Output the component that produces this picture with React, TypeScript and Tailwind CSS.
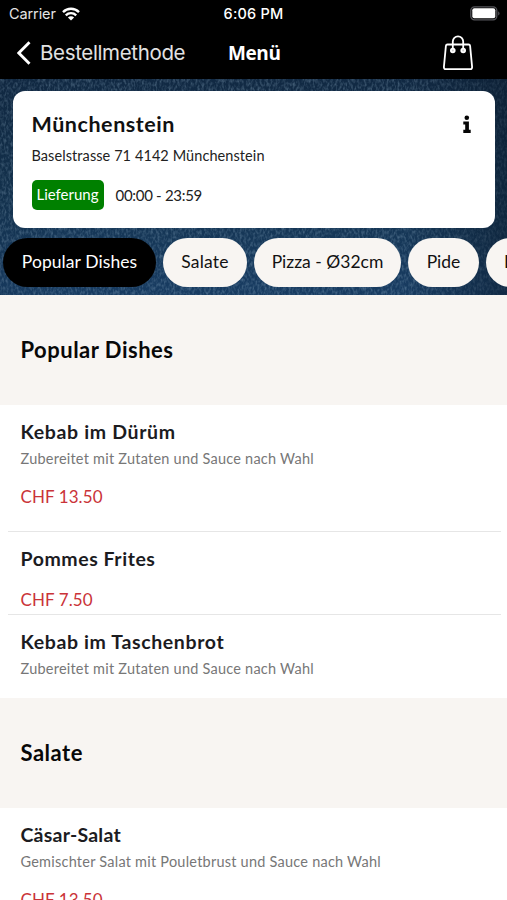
import React from "react";

type Dish = {
  name: string;
  nameClass: string;
  description?: string;
  price?: string;
  rowClass: string;
};

function Denim() {
  return (
    <svg className="absolute inset-0 h-full w-full" viewBox="0 0 507 216" preserveAspectRatio="none" aria-hidden="true">
      <defs>
        <linearGradient id="dye" x1="0" y1="0" x2="0" y2="1">
          <stop offset="0" stopColor="#112943" />
          <stop offset="0.5" stopColor="#14334f" />
          <stop offset="1" stopColor="#183c62" />
        </linearGradient>
        <linearGradient id="edge" x1="0" y1="0" x2="1" y2="0">
          <stop offset="0" stopColor="#0a1a2c" stopOpacity="0.1" />
          <stop offset="0.12" stopColor="#0a1a2c" stopOpacity="0" />
          <stop offset="0.8" stopColor="#0a1a2c" stopOpacity="0" />
          <stop offset="1" stopColor="#0a1a2c" stopOpacity="0.55" />
        </linearGradient>
        <filter id="weave" x="0" y="0" width="100%" height="100%">
          <feTurbulence type="fractalNoise" baseFrequency="0.45 0.25" numOctaves="2" seed="8" />
          <feColorMatrix values="0 0 0 0 0.34  0 0 0 0 0.5  0 0 0 0 0.64  0.7 0 0 0 -0.28" />
        </filter>
      </defs>
      <rect width="507" height="216" fill="url(#dye)" />
      <rect width="507" height="216" filter="url(#weave)" />
      <rect width="507" height="216" fill="url(#edge)" />
    </svg>
  );
}

function StatusBar() {
  return (
    <div className="flex h-[27px] items-center justify-between pr-[7px] pl-[9px] font-['Inter',sans-serif] text-white">
      <div className="flex w-[179px] items-center gap-[6px]">
        <span className="text-[14.5px] tracking-[-0.1px] text-[#e4e4e4]">Carrier</span>
        <svg width="18" height="14" viewBox="0 0 18 14" fill="none" stroke="#fff" strokeWidth="2.4">
          <path d="M1 5.1a11.4 11.4 0 0 1 16 0" />
          <path d="M3.8 8.3a7.4 7.4 0 0 1 10.4 0" />
          <path d="M9 13.6 5.9 10.5a4.4 4.4 0 0 1 6.2 0z" fill="#fff" stroke="none" />
        </svg>
      </div>
      <span className="text-[14.5px] font-medium tracking-[0.2px]">6:06 PM</span>
      <div className="flex w-[181px] justify-end">
        <svg width="30" height="15" viewBox="0 0 30 15">
          <rect x="0.8" y="0.8" width="26" height="13" rx="3.7" fill="none" stroke="#55555a" strokeWidth="1.3" />
          <rect x="2.3" y="2.3" width="23" height="10" rx="2" fill="#fff" />
          <path d="M28.2 5.2a2.5 2.5 0 0 1 0 4.4z" fill="#55555a" />
        </svg>
      </div>
    </div>
  );
}

function NavBar() {
  return (
    <div className="flex h-[52px] items-center pr-[34px] pl-[17px] text-white">
      <svg width="14" height="24" viewBox="0 0 14 24" fill="none" stroke="#fff" strokeWidth="2.9">
        <path d="M12.5 1.2 1.8 12l10.7 10.8" />
      </svg>
      <span className="ml-[9px] w-[188px] font-['Inter',sans-serif] text-[20.5px] tracking-[-0.35px] whitespace-nowrap text-[#e2e2e2]">
        Bestellmethode
      </span>
      <span className="font-['Open_Sans',sans-serif] text-[19px] font-bold tracking-[-0.4px]">Menü</span>
      <svg className="ml-auto" width="30" height="36" viewBox="0 0 30 36" fill="none" stroke="#fff" strokeWidth="1.8" strokeLinejoin="round">
        <path d="M4.4 9.5h21.2q1.3 0 1.5 1.3l2 21.1q.1 2.2-1.9 2.2H2.8q-2 0-1.9-2.2l2-21.1Q3.1 9.5 4.4 9.5z" />
        <path d="M9.8 14.5V6.5a5.2 5.2 0 0 1 10.4 0v8" />
        <circle cx="9.8" cy="15.500" r="1.9" fill="#ccc" />
        <circle cx="20.2" cy="15.500" r="1.9" fill="#ccc" />
      </svg>
    </div>
  );
}

function StoreCard() {
  return (
    <div className="relative mr-[12.5px] ml-[13px] h-[137px] rounded-[12px] bg-white pt-[18px] pr-[24px] pl-[18.5px]">
      <div className="flex h-[30px] items-center justify-between">
        <h1 className="text-[21.5px] font-bold tracking-[0.55px] text-[#111]">Münchenstein</h1>
        <svg width="8" height="18" viewBox="0 0 8 18" fill="#050505">
          <circle cx="3.8" cy="2.7" r="2.3" />
          <path d="M.3 6.5h5.6v8.3h1.8V18H.3v-3.2h1.9V9.5H.3z" />
        </svg>
      </div>
      <p className="mt-[7px] text-[14.5px] leading-[20px] tracking-[0.08px] text-[#222]">Baselstrasse 71 4142 Münchenstein</p>
      <div className="mt-[14px] flex items-center gap-[12px]">
        <span className="flex h-[30px] w-[72px] items-center justify-center rounded-[5px] bg-[#008000] pb-px text-[15px] text-white">Lieferung</span>
        <span className="text-[15px] tracking-[-0.3px] text-[#222]">00:00 - 23:59</span>
      </div>
    </div>
  );
}

function Categories() {
  const base = "flex h-[49px] shrink-0 items-center rounded-full text-[17.5px] whitespace-nowrap";
  return (
    <div className="relative mt-[10px] flex gap-[7px] overflow-hidden pl-[3px]">
      <span className={`${base} w-[153px] justify-center bg-black tracking-[0.08px] text-white`}>Popular Dishes</span>
      <span className={`${base} w-[84px] justify-center bg-[#f8f5f2] tracking-[0.2px] text-[#111]`}>Salate</span>
      <span className={`${base} w-[147px] justify-center bg-[#f8f5f2] text-[#111]`}>Pizza - Ø32cm</span>
      <span className={`${base} w-[71px] justify-center bg-[#f8f5f2] text-[#111]`}>Pide</span>
      <span className={`${base} w-[110px] bg-[#f8f5f2] pl-[18px] text-[#111]`}>Lahmacun</span>
    </div>
  );
}

function SectionTitle({ title }: { title: string }) {
  return (
    <div className="flex h-[110px] items-center bg-[#f8f5f2] pb-px pl-[20.5px]">
      <h2 className="text-[22px] font-bold tracking-[0.5px] text-[#080808]">{title}</h2>
    </div>
  );
}

function DishRow({ dish }: { dish: Dish }) {
  return (
    <div className={`pl-[12.5px] ${dish.rowClass}`}>
      <h3 className={`text-[19.5px] leading-[26px] font-bold text-[#1c1c1f] ${dish.nameClass}`}>{dish.name}</h3>
      {dish.description && (
        <p className="mt-[4px] text-[14.5px] leading-[20px] tracking-[0.23px] text-[#777]">{dish.description}</p>
      )}
      {dish.price && (
        <p className={`text-[17px] leading-[22px] tracking-[0.08px] text-[#ca3338] ${dish.description ? "mt-[17px]" : "mt-[17px]"}`}>
          {dish.price}
        </p>
      )}
    </div>
  );
}

const popular: Dish[] = [
  {
    name: "Kebab im Dürüm",
    nameClass: "tracking-[0.65px]",
    description: "Zubereitet mit Zutaten und Sauce nach Wahl",
    price: "CHF 13.50",
    rowClass: "h-[127px] border-b border-[#e6e6e6] pt-[14px]",
  },
  {
    name: "Pommes Frites",
    nameClass: "tracking-[0.55px]",
    price: "CHF 7.50",
    rowClass: "h-[83px] border-b border-[#e6e6e6] pt-[14px]",
  },
  {
    name: "Kebab im Taschenbrot",
    nameClass: "tracking-[0.62px]",
    description: "Zubereitet mit Zutaten und Sauce nach Wahl",
    rowClass: "h-[83px] pt-[14px]",
  },
];

const salads: Dish[] = [
  {
    name: "Cäsar-Salat",
    nameClass: "tracking-[0.22px]",
    description: "Gemischter Salat mit Pouletbrust und Sauce nach Wahl",
    price: "CHF 13.50",
    rowClass: "h-[127px] pt-[14px]",
  },
];

export default function App() {
  return (
    <main className="h-[900px] w-[507px] overflow-hidden bg-white font-['Lato',sans-serif]">
      <header className="bg-black">
        <StatusBar />
        <NavBar />
      </header>
      <section className="relative h-[216px] pt-[12px]">
        <Denim />
        <StoreCard />
        <Categories />
      </section>
      <SectionTitle title="Popular Dishes" />
      <div className="pr-[6px] pl-[8px]">
        {popular.map((dish) => (
          <DishRow key={dish.name} dish={dish} />
        ))}
      </div>
      <SectionTitle title="Salate" />
      <div className="pr-[6px] pl-[8px]">
        {salads.map((dish) => (
          <DishRow key={dish.name} dish={dish} />
        ))}
      </div>
    </main>
  );
}
